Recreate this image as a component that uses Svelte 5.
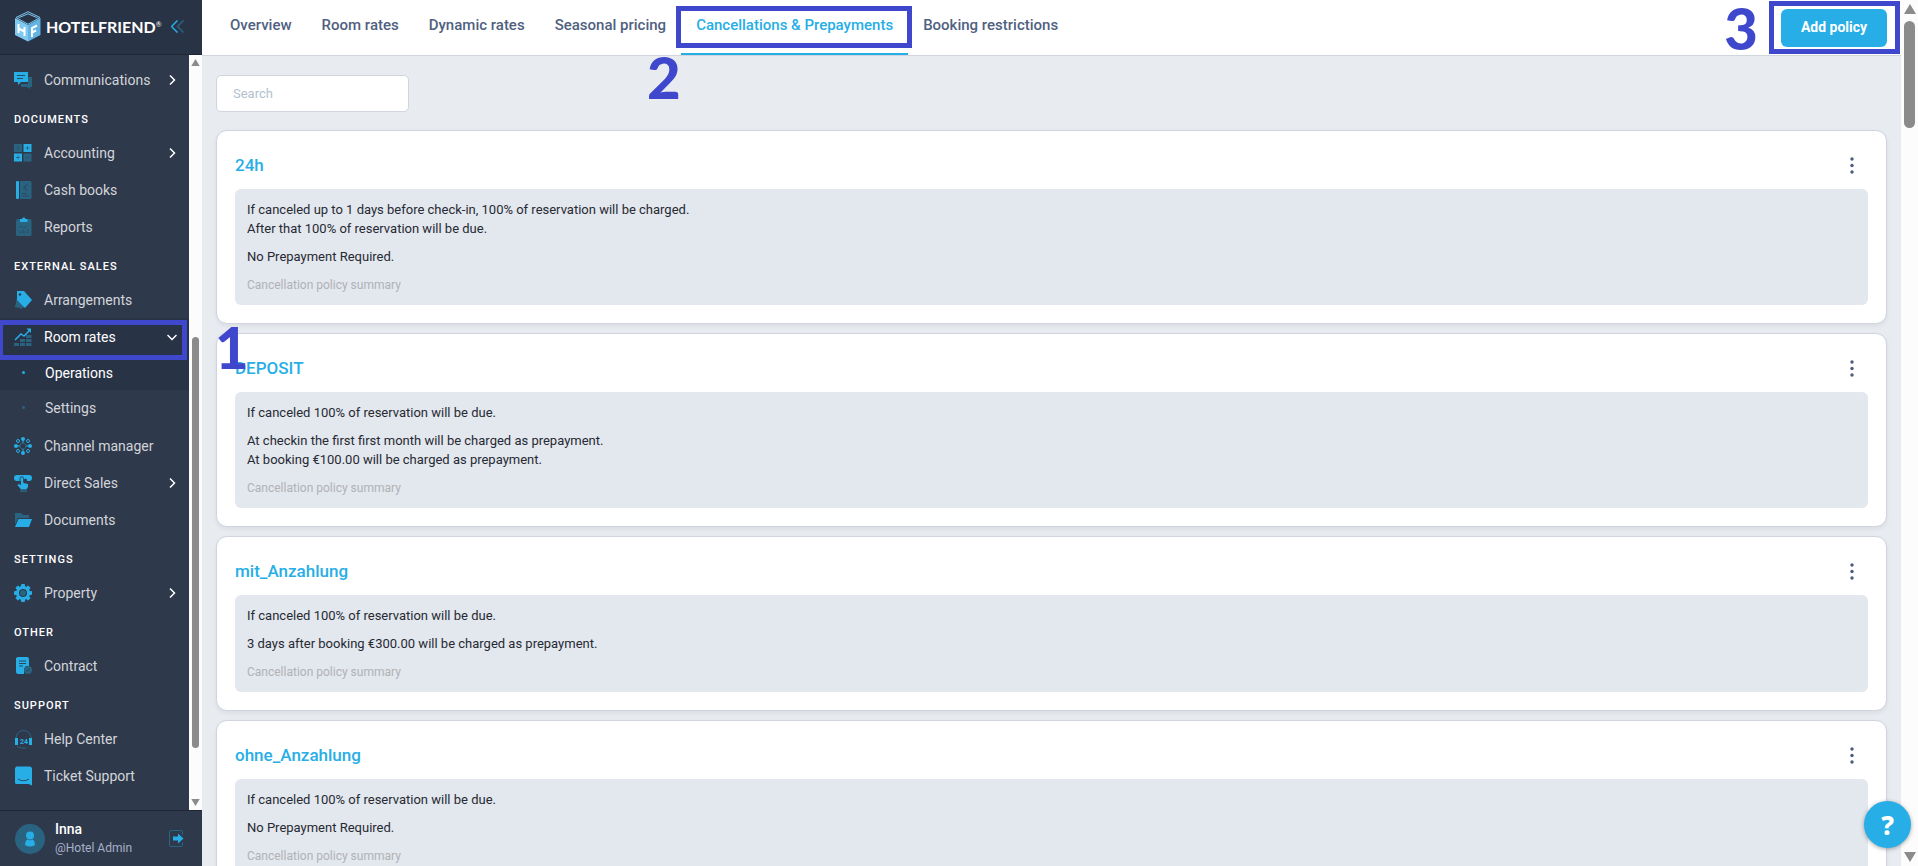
<script lang="ts">
  interface NavItem {
    label: string;
    icon: string;
    arrow?: boolean;
    children?: string[];
  }

  interface NavGroup {
    title: string;
    items: NavItem[];
  }

  interface Policy {
    name: string;
    cancellation: string[];
    prepayment: string[];
  }

  const groups: NavGroup[] = [
    { title: "", items: [{ label: "Communications", icon: "chat", arrow: true }] },
    {
      title: "Documents",
      items: [
        { label: "Accounting", icon: "accounting", arrow: true },
        { label: "Cash books", icon: "cashbook" },
        { label: "Reports", icon: "reports" },
      ],
    },
    {
      title: "External sales",
      items: [
        { label: "Arrangements", icon: "tag" },
        { label: "Room rates", icon: "rates", children: ["Operations", "Settings"] },
        { label: "Channel manager", icon: "channel" },
        { label: "Direct Sales", icon: "direct", arrow: true },
        { label: "Documents", icon: "folder" },
      ],
    },
    { title: "Settings", items: [{ label: "Property", icon: "gear", arrow: true }] },
    { title: "Other", items: [{ label: "Contract", icon: "contract" }] },
    {
      title: "Support",
      items: [
        { label: "Help Center", icon: "headset" },
        { label: "Ticket Support", icon: "ticket" },
      ],
    },
  ];

  const tabs = [
    "Overview",
    "Room rates",
    "Dynamic rates",
    "Seasonal pricing",
    "Cancellations & Prepayments",
    "Booking restrictions",
  ];

  const policies: Policy[] = [
    {
      name: "24h",
      cancellation: [
        "If canceled up to 1 days before check-in, 100% of reservation will be charged.",
        "After that 100% of reservation will be due.",
      ],
      prepayment: ["No Prepayment Required."],
    },
    {
      name: "DEPOSIT",
      cancellation: ["If canceled 100% of reservation will be due."],
      prepayment: [
        "At checkin the first first month will be charged as prepayment.",
        "At booking €100.00 will be charged as prepayment.",
      ],
    },
    {
      name: "mit_Anzahlung",
      cancellation: ["If canceled 100% of reservation will be due."],
      prepayment: ["3 days after booking €300.00 will be charged as prepayment."],
    },
    {
      name: "ohne_Anzahlung",
      cancellation: ["If canceled 100% of reservation will be due."],
      prepayment: ["No Prepayment Required."],
    },
  ];

  const menuScroll = { top: 37, height: 56 };
  const pageScroll = { top: 0, height: 13 };

  let activeTab = $state("Cancellations & Prepayments");
  let activeSub = $state("Operations");
  let ratesOpen = $state(true);
  let search = $state("");

  let visible = $derived(policies.filter((p) => p.name.toLowerCase().includes(search.toLowerCase())));
</script>

{#snippet icon(name: string)}
  <svg class="icon" viewBox="0 0 18 18" width="18" height="18" aria-hidden="true">
    {#if name === "chat"}
      <path class="dim" d="M14 6h4v10h-2v2l-3-2H7v-3h7z" />
      <path class="lit" d="M0 1h14v10H7l-3 3v-3H0z" />
      <path class="cut" d="M3 4.500h8M3 7.500h6" />
    {:else if name === "accounting"}
      <rect class="dim" x="0" y="0" width="8" height="8" />
      <rect class="lit" x="9.500" y="0" width="8" height="8" />
      <rect class="lit" x="0" y="9.500" width="8" height="8" />
      <rect class="dim" x="9.500" y="9.500" width="8" height="8" />
      <path class="cut soft" d="M2.500 2.500l3 3m0-3l-3 3M13.500 2v4m-2-2h4M4 11.500v4m-2-2h4M11.500 13.500h4" />
    {:else if name === "cashbook"}
      <rect class="lit" x="2" y="0" width="3" height="18" rx="1" />
      <path class="dim" d="M6 0h10a1.500 1.500 0 0 1 1.500 1.500v15A1.500 1.500 0 0 1 16 18H6z" />
      <path class="cut" d="M14 4.500a2.500 2.500 0 1 0 0 4M9 6.500h4M8 12.500h5M8 15h7" />
    {:else if name === "reports"}
      <path class="dim" d="M3 1h13a1.500 1.500 0 0 1 1.500 1.500v14A1.500 1.500 0 0 1 16 18H3.500A1.500 1.500 0 0 1 2 16.500v-14z" />
      <path class="lit" d="M6 1h2a1.800 1.800 0 0 1 3.500 0h2v3H6z" />
      <path class="cut" d="M5 10l2.500-2 2.500 2 3-2M6 13v2.500M9 12v3.500M11 13v2.500M14 11v4.500" />
    {:else if name === "tag"}
      <path class="dim" d="M3 6L1 16l4 1 2-5zM5 10l1 8 5-2z" />
      <path class="lit" d="M3 0h7l8 9-7 8-8-8z" />
      <circle class="hole" cx="6" cy="3.500" r="1.200" />
    {:else if name === "rates"}
      <path class="dim" d="M0 15h5v3H0zM6 11h5v3H6zM6 15h5v3H6zM12 7h5.500v3H12zM12 11h5.500v3H12zM12 15h5.500v3H12z" />
      <path class="line" d="M1 12l6-6 3 2 6-6" />
      <path class="lit" d="M12.500.500H17v4.500z" />
    {:else if name === "channel"}
      <circle class="dimline" cx="9" cy="9" r="3" />
      <path class="line thin" d="M9 3v3M9 12v3M3 9h3M12 9h3" />
      {#each [[9, 2], [9, 16], [2, 9], [16, 9]] as [cx, cy]}
        <circle class="lit" {cx} {cy} r="2" />
      {/each}
      {#each [[4, 4], [14, 4], [4, 14], [14, 14]] as [cx, cy]}
        <circle class="line thin" {cx} {cy} r="1.500" />
      {/each}
    {:else if name === "direct"}
      <path class="lit" d="M3 1h12a3 3 0 0 1 0 6h-2V5.500a1.800 1.800 0 0 0-3 0V7H3a3 3 0 0 1 0-6z" />
      <path class="lit" d="M7 4.500a1.200 1.200 0 0 1 2.400 0V9l4.600 1v3l-1.500 2.500H7L3.500 11l1-1L7 11z" />
      <path class="cut" d="M6 9V4.500a1.800 1.800 0 0 1 3.600 0V8" />
      <path class="dim" d="M6 16.500h7V18H6z" />
    {:else if name === "folder"}
      <path class="dim" d="M1 2h6l2 2h6v3H4L1 14z" />
      <path class="lit" d="M4.500 8H18l-3 8H1z" />
    {:else if name === "gear"}
      {#each [0, 45, 90, 135] as angle}
        <rect class="lit" x="7" y="0" width="4" height="18" rx="1" transform="rotate({angle} 9 9)" />
      {/each}
      <circle class="lit" cx="9" cy="9" r="7" />
      <circle class="hole" cx="9" cy="9" r="4" />
      <circle class="dim" cx="9" cy="9" r="3" />
    {:else if name === "contract"}
      <path class="lit" d="M4 0h9a2 2 0 0 1 2 2v7h-3l-2 3v5H4a2 2 0 0 1-2-2V1z" />
      <path class="cut" d="M5 4h7M5 6.500h7M5 9h4" />
      <circle class="dim" cx="14" cy="13" r="4" />
      <path class="cut" d="M12 13l1.500 1.500L16 12" />
    {:else if name === "headset"}
      <path class="dimline" d="M2 8a7.500 7.500 0 0 1 15 0M3 16q1 2 5 2h4" />
      <rect class="lit" x="1" y="8" width="3" height="7" />
      <rect class="lit" x="15" y="8" width="3" height="7" />
      <text x="6" y="14">24</text>
    {:else if name === "ticket"}
      <path class="lit" d="M2.500-.500h13A2.500 2.500 0 0 1 18 2v16.500L14.500 17h-12A1.500 1.500 0 0 1 1 15.500V1z" />
      <path class="cut" d="M4 12q5.500 3.500 11 0" />
    {/if}
  </svg>
{/snippet}

{#snippet kebab()}
  <svg viewBox="0 0 4 17" width="4" height="17" aria-hidden="true">
    <circle cx="2" cy="2" r="1.700" />
    <circle cx="2" cy="8.500" r="1.700" />
    <circle cx="2" cy="15" r="1.700" />
  </svg>
{/snippet}

<div class="app">
  <aside class="sidebar">
    <header class="brand">
      <a class="logo" href="#home">
        <svg viewBox="0 0 26 31" width="26" height="31" aria-hidden="true">
          <path fill="#7fc8f0" d="M0 7l13 7v16.500L0 24z" />
          <path fill="#62b4e4" d="M25.500 7L13 14v16.500L25.500 24z" />
          <path fill="none" stroke="#7fc8f0" d="M1 6.500L13 .700l12 5.800-12 6.700z" />
          <path fill="none" stroke="#7fc8f0" d="M3.500 6.800L13 2.800l9.500 4" />
          <path fill="#293346" d="M6 8q7-6 14 0l-7 4z" />
          <path fill="none" stroke="#fff" stroke-width="2" d="M3.500 13v9M9.500 16v9M3.500 17.500l6 3M17 26v-9l5-2.500M17 21.500l4-2" />
        </svg>
        <span>HOTELFRIEND<sup>®</sup></span>
      </a>
      <button class="collapse" aria-label="Collapse menu">
        <svg viewBox="0 0 13 13" width="13" height="13" aria-hidden="true">
          <path stroke="#27aee6" d="M6.500.500l-6 6 6 6" />
          <path stroke="#2a6380" d="M12.500.500l-6 6 6 6" />
        </svg>
      </button>
    </header>

    <div class="menu">
      <nav>
        {#each groups as group}
          {#if group.title}
            <h2>{group.title}</h2>
          {/if}
          {#each group.items as item}
            {#if item.children}
              <button class="item open" aria-expanded={ratesOpen} onclick={() => (ratesOpen = !ratesOpen)}>
                {@render icon(item.icon)}
                <span>{item.label}</span>
                <svg class="arrow" viewBox="0 0 10 10" width="10" height="10" aria-hidden="true"><path d="M.500 3L5 7.500 9.500 3" /></svg>
                <i class="frame frame-menu"></i>
              </button>
              {#if ratesOpen}
                <div class="submenu">
                  {#each item.children as child}
                    <a class="sub" class:active={child === activeSub} href="#{child}" onclick={() => (activeSub = child)}>
                      {child}
                    </a>
                  {/each}
                </div>
              {/if}
            {:else}
              <a class="item" href="#{item.icon}">
                {@render icon(item.icon)}
                <span>{item.label}</span>
                {#if item.arrow}
                  <svg class="arrow" viewBox="0 0 10 10" width="10" height="10" aria-hidden="true"><path d="M3 .500L7.500 5 3 9.500" /></svg>
                {/if}
              </a>
            {/if}
          {/each}
        {/each}
      </nav>
      <div class="scrollbar small" aria-hidden="true">
        <svg viewBox="0 0 12 10" width="9" height="7"><path d="M6 0l6 10H0z" /></svg>
        <div class="track">
          <div class="thumb" style="top: {menuScroll.top}%; height: {menuScroll.height}%"></div>
        </div>
        <svg viewBox="0 0 12 10" width="9" height="7"><path d="M0 0h12L6 10z" /></svg>
      </div>
    </div>

    <footer class="user">
      <svg viewBox="0 0 30 30" width="30" height="30" aria-hidden="true">
        <circle cx="15" cy="15" r="15" fill="#2a6380" />
        <circle cx="15" cy="11.500" r="4" fill="#27aee6" />
        <path fill="#27aee6" d="M12 15.500q3 1.500 6 0 2 2 2 5.500-5 3-10 0 0-3.500 2-5.500z" />
      </svg>
      <div class="who">
        <strong>Inna</strong>
        <span>@Hotel Admin</span>
      </div>
      <button class="logout" aria-label="Log out">
        <svg viewBox="0 0 15 17" width="15" height="17" aria-hidden="true">
          <path fill="none" stroke="#2a6380" d="M13.500 5V2a1.500 1.500 0 0 0-1.500-1.500H2A1.500 1.500 0 0 0 .500 2v13A1.500 1.500 0 0 0 2 16.500h10a1.500 1.500 0 0 0 1.500-1.500v-3" />
          <path fill="#27aee6" d="M4 6.500h5V3.500l5.500 5-5.500 5v-3H4z" />
        </svg>
      </button>
    </footer>
  </aside>

  <main>
    <header class="topbar">
      <nav class="tabs">
        {#each tabs as tab}
          <a class="tab" class:active={tab === activeTab} href="#{tab}" onclick={() => (activeTab = tab)}>
            {tab}
            {#if tab === "Cancellations & Prepayments"}
              <i class="frame frame-tab"></i>
            {/if}
          </a>
        {/each}
      </nav>
      <button class="add">Add policy<i class="frame frame-add"></i></button>
    </header>

    <div class="content">
      <input type="search" placeholder="Search" aria-label="Search" bind:value={search} />

      {#each visible as policy (policy.name)}
        <section class="card">
          <div class="card-head">
            <h3>{policy.name}</h3>
            <button class="more" aria-label="More actions">{@render kebab()}</button>
          </div>
          <div class="summary">
            <div>
              {#each policy.cancellation as line}
                <p>{line}</p>
              {/each}
            </div>
            <div>
              {#each policy.prepayment as line}
                <p>{line}</p>
              {/each}
            </div>
            <small>Cancellation policy summary</small>
          </div>
        </section>
      {/each}
    </div>
  </main>

  <div class="scrollbar" aria-hidden="true">
    <svg viewBox="0 0 12 10" width="12" height="10"><path d="M6 0l6 10H0z" /></svg>
    <div class="track">
      <div class="thumb" style="top: {pageScroll.top}%; height: {pageScroll.height}%"></div>
    </div>
    <svg viewBox="0 0 12 10" width="12" height="10"><path d="M0 0h12L6 10z" /></svg>
  </div>

  <button class="help" aria-label="Help">?</button>

  <span class="step step-1">1</span>
  <span class="step step-2">2</span>
  <span class="step step-3">3</span>
</div>

<style>
  :global(body) {
    margin: 0;
    background: #e8ebf0;
  }

  .app {
    position: relative;
    display: flex;
    height: 100vh;
    overflow: hidden;
    font-family: Roboto, "Liberation Sans", sans-serif;
    font-size: 14px;
    color: #262a33;
  }

  .app * {
    box-sizing: border-box;
  }

  a {
    color: inherit;
    text-decoration: none;
  }

  button {
    padding: 0;
    border: none;
    background: none;
    font: inherit;
    color: inherit;
    cursor: pointer;
  }

  h2,
  h3,
  p {
    margin: 0;
  }

  /* sidebar */
  .sidebar {
    display: flex;
    flex-direction: column;
    flex: none;
    width: 202px;
    background: #2f394c;
    color: #d2d5da;
  }

  .brand {
    display: flex;
    align-items: center;
    justify-content: space-between;
    height: 55px;
    padding: 0 18px 2px 15px;
    background: #293346;
    border-bottom: 1px solid #1d2536;
  }

  .logo {
    display: flex;
    align-items: center;
    gap: 5px;
    font-family: Lato, sans-serif;
    font-size: 16px;
    font-weight: 700;
    color: #fff;
  }

  .logo sup {
    font-size: 7px;
    font-weight: 400;
    vertical-align: 6px;
    line-height: 0;
  }

  .collapse,
  .logout {
    display: flex;
  }

  .collapse path {
    fill: none;
    stroke-width: 1.5;
  }

  .menu {
    display: flex;
    flex: 1;
    min-height: 0;
  }

  .menu nav {
    flex: 1;
    padding-top: 6px;
    overflow: hidden;
  }

  .menu h2 {
    height: 36px;
    padding-left: 14px;
    font-size: 11px;
    font-weight: 500;
    line-height: 44px;
    letter-spacing: 1px;
    text-transform: uppercase;
    color: #fff;
  }

  .item {
    position: relative;
    display: flex;
    align-items: center;
    width: 100%;
    height: 37px;
    padding: 0 12px 0 14px;
    text-align: left;
  }

  .item span {
    flex: 1;
    margin-left: 12px;
    white-space: nowrap;
  }

  .item.open {
    background: #293346;
    color: #fff;
  }

  .arrow path {
    fill: none;
    stroke: #fff;
    stroke-width: 1.5;
  }

  .submenu {
    padding-bottom: 2px;
  }

  .sub {
    display: flex;
    align-items: center;
    height: 35px;
    padding-left: 22px;
  }

  .sub::before {
    content: "";
    width: 3px;
    height: 3px;
    margin-right: 20px;
    border-radius: 50%;
    background: #2a6380;
  }

  .sub.active {
    background: #293346;
    color: #fff;
  }

  .sub.active::before {
    background: #27aee6;
  }

  .icon {
    flex: none;
    overflow: visible;
  }

  .lit {
    fill: #27aee6;
  }

  .dim {
    fill: #2a6380;
  }

  .hole {
    fill: #2f394c;
  }

  .cut {
    fill: none;
    stroke: #2b4a63;
  }

  .cut.soft {
    opacity: 0.6;
  }

  .line {
    fill: none;
    stroke: #27aee6;
    stroke-width: 1.5;
  }

  .line.thin {
    stroke-width: 1;
  }

  .dimline {
    fill: none;
    stroke: #2a6380;
  }

  .icon text {
    font-size: 7px;
    font-weight: 700;
    fill: #27aee6;
  }

  .user {
    display: flex;
    align-items: center;
    height: 56px;
    padding: 0 18px 0 15px;
    border-top: 1px solid #1d2536;
  }

  .who {
    display: flex;
    flex: 1;
    flex-direction: column;
    margin-left: 10px;
    line-height: 19px;
  }

  .who strong {
    font-weight: 500;
    color: #fff;
  }

  .who span {
    font-size: 12px;
    color: #a7b1c8;
  }

  /* scrollbars */
  .scrollbar {
    display: flex;
    flex-direction: column;
    align-items: center;
    flex: none;
    gap: 7px;
    width: 17px;
    padding: 4px 0;
    background: #fcfcfc;
  }

  .scrollbar.small {
    width: 13px;
    gap: 0;
  }

  .scrollbar path {
    fill: #8b8b8b;
  }

  .track {
    position: relative;
    flex: 1;
    width: 11px;
  }

  .small .track {
    width: 7px;
  }

  .thumb {
    position: absolute;
    width: 100%;
    border-radius: 6px;
    background: #8b8b8b;
  }

  /* main */
  main {
    display: flex;
    flex: 1;
    flex-direction: column;
    min-width: 0;
  }

  .topbar {
    display: flex;
    align-items: center;
    justify-content: space-between;
    flex: none;
    height: 56px;
    padding: 0 14px 0 13px;
    background: #fff;
    border-bottom: 1px solid #cfd4df;
  }

  .tabs {
    display: flex;
    height: 55px;
  }

  .tab {
    position: relative;
    padding: 0 15px;
    border-bottom: 2px solid transparent;
    font-size: 15px;
    font-weight: 500;
    line-height: 50px;
    white-space: nowrap;
    color: #50617f;
  }

  .tab.active {
    border-bottom-color: #27aee6;
    color: #27aee6;
  }

  .add {
    position: relative;
    width: 106px;
    height: 38px;
    padding-bottom: 2px;
    border-radius: 6px;
    background: #27aee6;
    font-weight: 700;
    color: #fff;
  }

  .content {
    display: flex;
    flex-direction: column;
    gap: 9px;
    padding: 19px 14px;
  }

  input {
    width: 193px;
    height: 37px;
    margin-bottom: 9px;
    padding: 0 16px;
    border: 1px solid #cfd4df;
    border-radius: 5px;
    background: #fff;
    font: inherit;
    font-size: 13px;
    outline: none;
  }

  input::placeholder {
    color: #b3bfd0;
  }

  .card {
    flex: none;
    padding: 0 18px 18px;
    border: 1px solid #cfd4df;
    border-radius: 11px;
    background: #fff;
    box-shadow: 0 2px 4px rgba(50, 60, 80, 0.08);
  }

  .card-head {
    display: flex;
    align-items: center;
    justify-content: space-between;
    height: 58px;
    padding: 10px 14px 0 0;
  }

  h3 {
    font-size: 17px;
    font-weight: 500;
    color: #27aee6;
  }

  .more {
    display: flex;
  }

  .more circle {
    fill: #4a5c7e;
  }

  .summary {
    display: flex;
    flex-direction: column;
    gap: 9px;
    padding: 11px 12px 9px;
    border-radius: 6px;
    background: #e3e7ee;
    font-size: 13px;
    line-height: 19px;
  }

  .summary small {
    font-size: 12px;
    line-height: 21px;
    color: #b0b2b6;
  }

  .help {
    position: absolute;
    right: 7px;
    bottom: 18px;
    width: 47px;
    height: 47px;
    border-radius: 50%;
    background: #27aee6;
    box-shadow: 0 1px 4px rgba(0, 0, 0, 0.35);
    font-family: "Noto Sans", sans-serif;
    font-size: 26px;
    font-weight: 800;
    color: #fff;
  }

  /* guide marks */
  .frame {
    position: absolute;
    border: 5px solid #3f48cc;
    pointer-events: none;
  }

  .frame-menu {
    inset: 2px 2px -5px -2px;
  }

  .frame-tab {
    inset: 6px -4px 5px -5px;
  }

  .frame-add {
    inset: -8px -13px -7px -12px;
  }

  .step {
    position: absolute;
    font-family: Lato, sans-serif;
    font-size: 58px;
    font-weight: 900;
    line-height: 56px;
    color: #3f48cc;
    pointer-events: none;
  }

  .step-1 {
    top: 319px;
    left: 215px;
  }

  .step-2 {
    top: 49px;
    left: 647px;
  }

  .step-3 {
    top: 0;
    right: 160px;
  }
</style>
